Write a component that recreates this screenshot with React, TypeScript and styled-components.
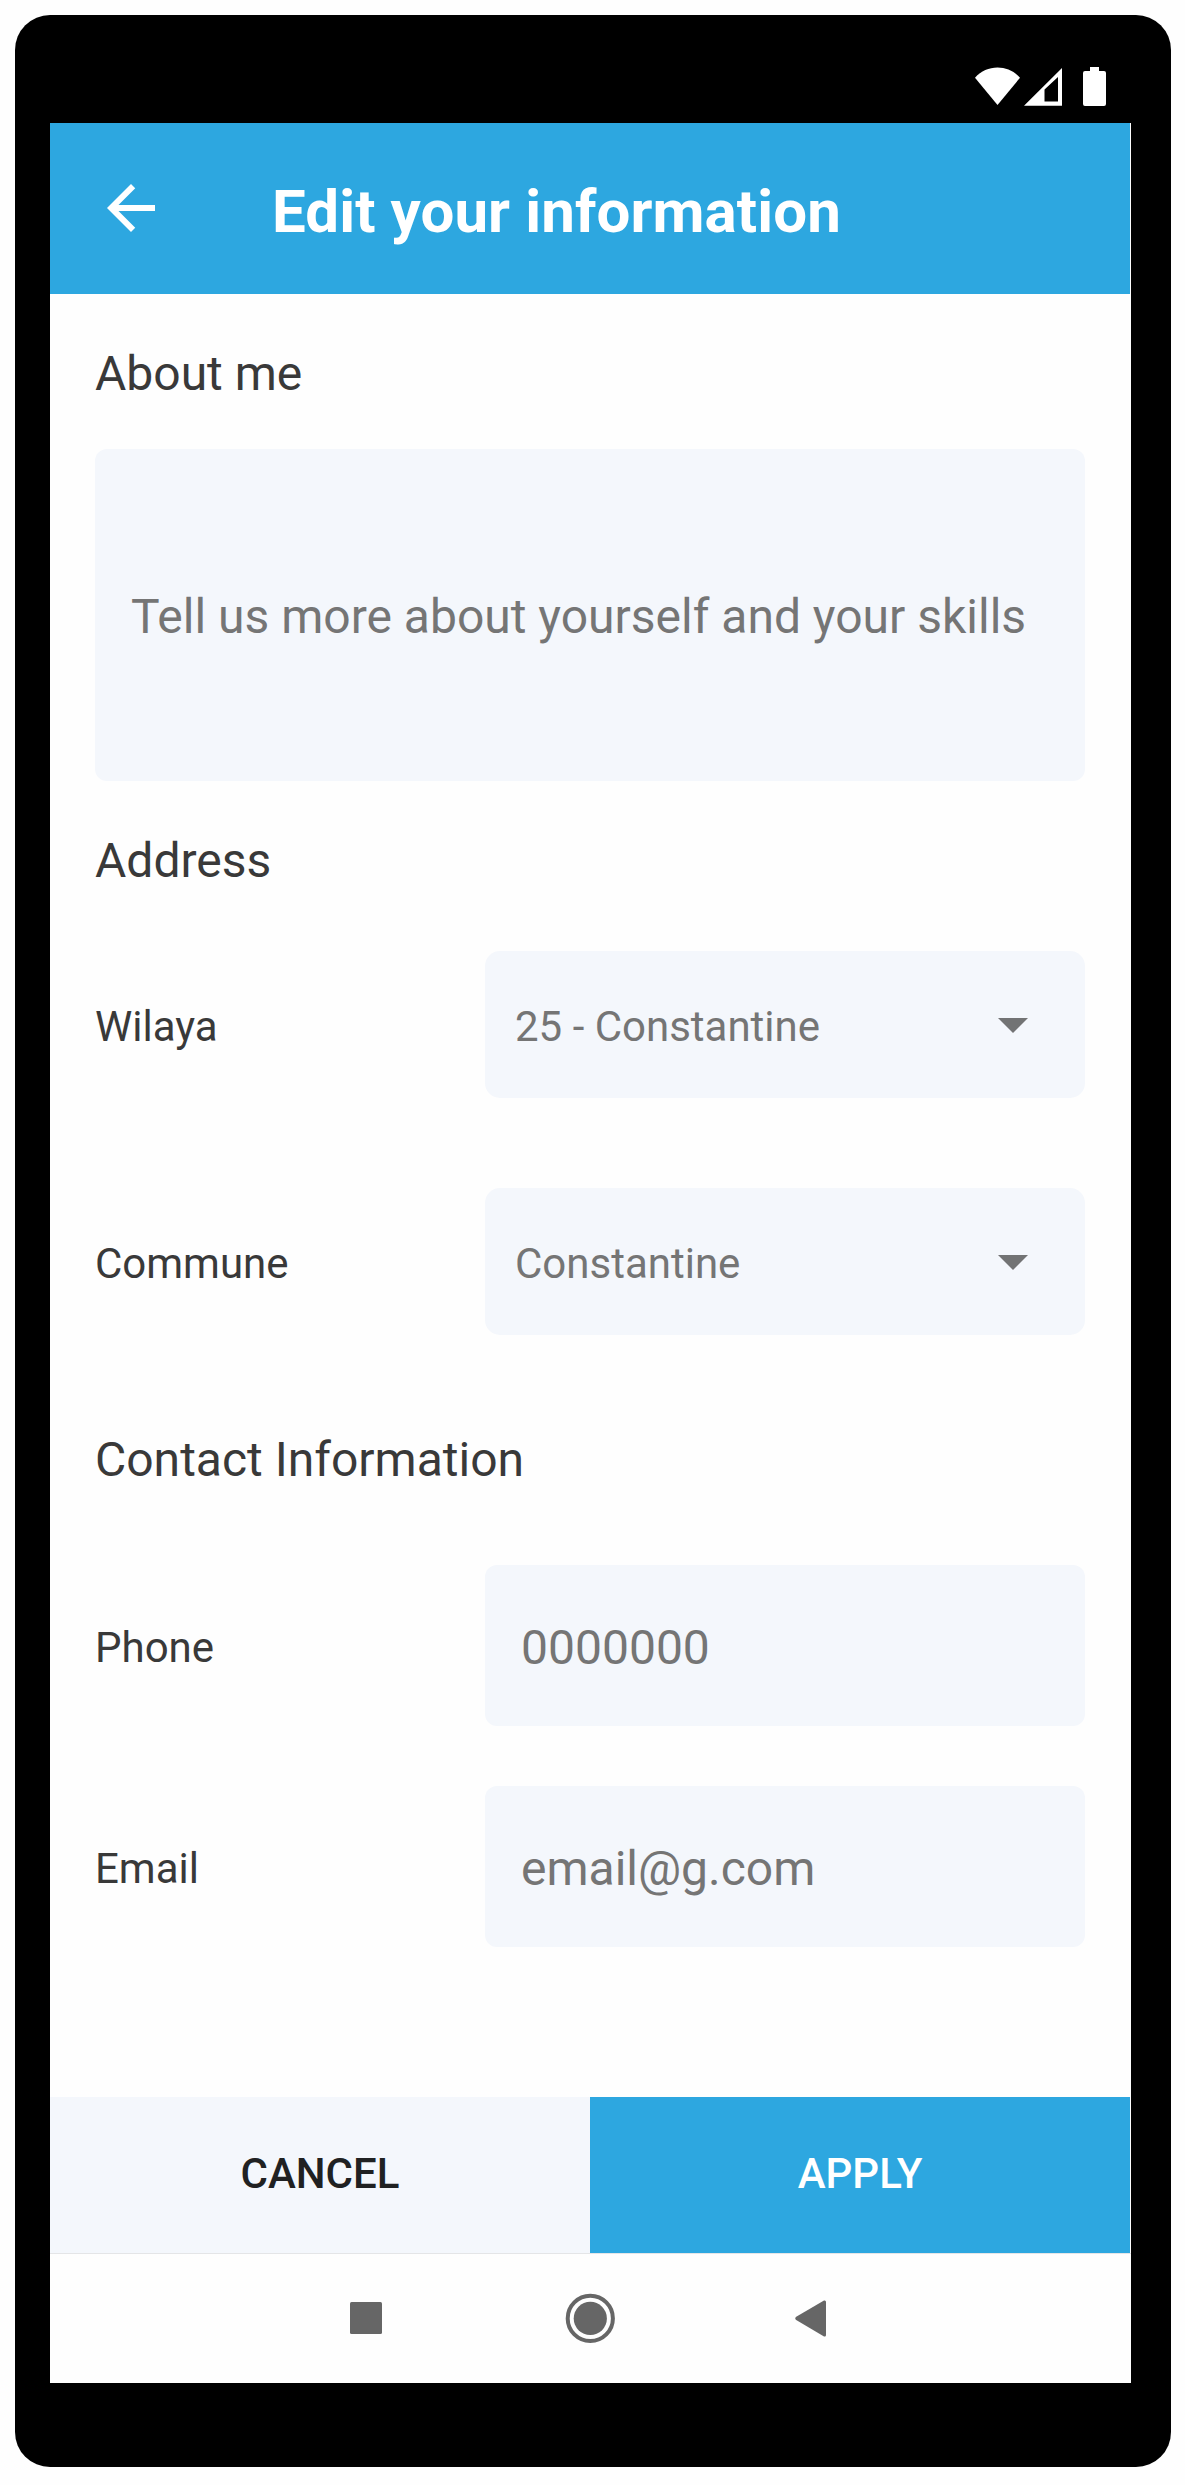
import React from 'react';
import styled, { createGlobalStyle } from 'styled-components';

const blue = '#2da7e0';
const field = '#f4f7fc';
const ink = '#393939';
const hint = '#757575';

const GlobalStyle = createGlobalStyle`
  *, *::before, *::after { box-sizing: border-box; }
  body {
    margin: 0;
    background: #fefefe;
    font-family: Roboto, 'Liberation Sans', sans-serif;
  }
`;

const Page = styled.div`
  width: 1185px;
  height: 2485px;
  padding: 15px 14px 18px 15px;
`;

const Phone = styled.div`
  display: flex;
  flex-direction: column;
  height: 2452px;
  padding: 0 40px 84px 35px;
  background: #000;
  border-radius: 35px;
`;

const StatusBar = styled.div`
  display: flex;
  flex: none;
  justify-content: flex-end;
  height: 108px;
  padding: 52px 25px 0 0;
`;

const StatusIcon = styled.svg<{ $gap?: number }>`
  display: block;
  height: 40px;
  margin-left: ${(p) => p.$gap ?? 0}px;
  fill: #fff;
`;

const Screen = styled.div`
  display: flex;
  flex: 1;
  flex-direction: column;
  background: #fefefe;
`;

const Header = styled.header`
  display: flex;
  flex: none;
  height: 171px;
  margin-right: 1px;
  padding-left: 45px;
  background: ${blue};
  color: #fff;
`;

const BackButton = styled.button`
  width: 72px;
  height: 72px;
  margin: 49px 105px 0 0;
  padding: 0;
  border: 0;
  background: none;
  svg { display: block; fill: #fff; }
`;

const Title = styled.h1`
  margin: 0;
  padding-top: 3px;
  font-size: 60px;
  font-weight: 700;
  letter-spacing: 0.1px;
  line-height: 171px;
  white-space: nowrap;
`;

const Form = styled.main`
  display: flex;
  flex: none;
  flex-direction: column;
  height: 1803px;
  padding: 50px 46px 0 45px;
`;

const SectionTitle = styled.h2<{ $top?: number; $bottom: number }>`
  margin: ${(p) => p.$top ?? 0}px 0 ${(p) => p.$bottom}px;
  color: ${ink};
  font-size: 48px;
  font-weight: 400;
  line-height: 60px;
`;

const AboutBox = styled.div`
  display: flex;
  flex: none;
  align-items: center;
  height: 332px;
  padding: 3px 36px 0;
  border-radius: 12px;
  background: ${field};
  color: ${hint};
  font-size: 48px;
  white-space: nowrap;
`;

const Rows = styled.div<{ $gap: number }>`
  display: flex;
  flex-direction: column;
  gap: ${(p) => p.$gap}px;
`;

const Row = styled.div<{ $height: number }>`
  display: grid;
  grid-template-columns: 390px 600px;
  height: ${(p) => p.$height}px;
`;

const Label = styled.label`
  display: flex;
  align-items: center;
  padding-top: 4px;
  color: ${ink};
  font-size: 42px;
`;

const Select = styled.div`
  display: flex;
  align-items: center;
  justify-content: space-between;
  padding: 0 57px 0 30px;
  border-radius: 15px;
  background: ${field};
  color: ${hint};
  font-size: 42px;
  span { padding-top: 4px; }
`;

const Caret = styled.svg`
  display: block;
  margin-top: 2px;
  fill: #727374;
`;

const Input = styled.div`
  display: flex;
  align-items: center;
  padding: 4px 36px 0;
  border-radius: 12px;
  background: ${field};
  color: ${hint};
  font-size: 48px;
`;

const Actions = styled.footer`
  display: grid;
  flex: none;
  grid-template-columns: 540px 540px;
  height: 157px;
  border-bottom: 1px solid #e4e5e7;
`;

const Action = styled.button<{ $primary?: boolean }>`
  padding: 0 0 3px;
  border: 0;
  background: ${(p) => (p.$primary ? blue : field)};
  color: ${(p) => (p.$primary ? '#fff' : '#202122')};
  font-family: inherit;
  font-size: 42px;
  font-weight: 500;
`;

const NavBar = styled.nav`
  display: flex;
  flex: 1;
  align-items: flex-start;
  padding: 38px 0 0 290px;
  svg { display: block; fill: #666; }
`;

const NavButton = styled.button<{ $gap?: number }>`
  width: 52px;
  height: 52px;
  margin: 0 0 0 ${(p) => p.$gap ?? 0}px;
  padding: 0;
  border: 0;
  background: none;
`;

function SelectRow({ label, value }: { label: string; value: string }) {
  return (
    <Row $height={147}>
      <Label>{label}</Label>
      <Select>
        <span>{value}</span>
        <Caret width="30" height="15" viewBox="0 0 30 15">
          <path d="M0 0H30L15 15Z" />
        </Caret>
      </Select>
    </Row>
  );
}

function InputRow({ label, value }: { label: string; value: string }) {
  return (
    <Row $height={161}>
      <Label>{label}</Label>
      <Input>{value}</Input>
    </Row>
  );
}

export default function App() {
  return (
    <Page>
      <GlobalStyle />
      <Phone>
        <StatusBar>
          <StatusIcon width="45" viewBox="0 0 45 40">
            <path d="M0 10.7C6 4 14 .5 22.5 .5S39 4 45 10.7L22.5 38Z" />
          </StatusIcon>
          <StatusIcon $gap={4} width="38" viewBox="0 0 38 40">
            <path fillRule="evenodd" d="M0 38.7L38 1V38.7ZM20.5 22.5V34.5H34V10Z" />
          </StatusIcon>
          <StatusIcon $gap={21} width="23" viewBox="0 0 23 40">
            <path d="M7 0H16V4H21Q23 4 23 6V37Q23 39 21 39H2Q0 39 0 37V6Q0 4 2 4H7Z" />
          </StatusIcon>
        </StatusBar>
        <Screen>
          <Header>
            <BackButton aria-label="Back">
              <svg width="72" height="72" viewBox="0 0 24 24">
                <path d="M20 11H7.83l5.59-5.59L12 4l-8 8 8 8 1.41-1.41L7.83 13H20v-2z" />
              </svg>
            </BackButton>
            <Title>Edit your information</Title>
          </Header>
          <Form>
            <SectionTitle $bottom={45}>About me</SectionTitle>
            <AboutBox>Tell us more about yourself and your skills</AboutBox>
            <SectionTitle $top={50} $bottom={60}>Address</SectionTitle>
            <Rows $gap={90}>
              <SelectRow label="Wilaya" value="25 - Constantine" />
              <SelectRow label="Commune" value="Constantine" />
            </Rows>
            <SectionTitle $top={95} $bottom={75}>Contact Information</SectionTitle>
            <Rows $gap={60}>
              <InputRow label="Phone" value="0000000" />
              <InputRow label="Email" value="email@g.com" />
            </Rows>
          </Form>
          <Actions>
            <Action>CANCEL</Action>
            <Action $primary>APPLY</Action>
          </Actions>
          <NavBar>
            <NavButton aria-label="Recent apps">
              <svg width="52" height="52" viewBox="0 0 52 52">
                <rect x="10" y="10" width="32" height="32" rx="1.5" />
              </svg>
            </NavButton>
            <NavButton $gap={172} aria-label="Home">
              <svg width="52" height="52" viewBox="0 0 52 52">
                <circle cx="26.3" cy="26.4" r="16.6" />
                <circle cx="26.3" cy="26.4" r="22.6" style={{ fill: 'none' }} stroke="#666" strokeWidth="4" />
              </svg>
            </NavButton>
            <NavButton $gap={170} aria-label="Back">
              <svg width="52" height="52" viewBox="0 0 52 52">
                <path d="M9.8 25Q8.6 26.4 9.8 27.8L38 44.4Q40 45 40 43V10Q40 8 38 8.5Z" />
              </svg>
            </NavButton>
          </NavBar>
        </Screen>
      </Phone>
    </Page>
  );
}
